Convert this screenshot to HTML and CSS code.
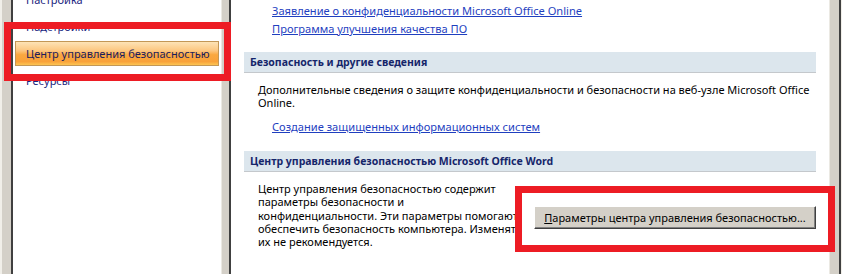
FILE: index.html
```html
<!DOCTYPE html>
<html lang="ru">
<head>
  <meta charset="UTF-8">
  <title>Параметры Word</title>
  <link rel="stylesheet" href="styles.css">
</head>
<body>
  <div class="dialog">
    <div class="nav">
      <ul class="nav-list">
        <li class="nav-item">Настройка</li>
        <li class="nav-item">Надстройки</li>
        <li class="nav-item is-active">Центр управления безопасностью</li>
        <li class="nav-item">Ресурсы</li>
      </ul>
    </div>

    <div class="main">
      <div class="links links-top">
        <a class="link" href="#">Заявление о конфиденциальности Microsoft Office Online</a>
        <a class="link" href="#">Программа улучшения качества ПО</a>
      </div>

      <div class="bar">Безопасность и другие сведения</div>
      <div class="section">
        <p class="text">Дополнительные сведения о защите конфиденциальности и безопасности на веб-узле Microsoft Office<br>Online.</p>
        <div class="links links-inner">
          <a class="link" href="#">Создание защищенных информационных систем</a>
        </div>
      </div>

      <div class="bar bar-second">Центр управления безопасностью Microsoft Office Word</div>
      <div class="section section-row">
        <p class="text">Центр управления безопасностью содержит<br>параметры безопасности и<br>конфиденциальности. Эти параметры помогают<br>обеспечить безопасность компьютера. Изменять<br>их не рекомендуется.</p>
        <button class="btn" type="button"><u>П</u>араметры центра управления безопасностью...</button>
      </div>
    </div>
  </div>

  <!-- красные рамки-выделения поверх окна -->
  <div class="mark mark-nav"></div>
  <div class="mark mark-btn"></div>
</body>
</html>
```

FILE: styles.css
```css
body {
  margin: 0;
  font-family: "Noto Sans", "Open Sans", sans-serif;
  font-size: 11.1px;
  color: #000;
  background: #fff;
}
.dialog {
  display: flex;
  height: 274px;
  box-sizing: border-box;
  background: #d4d0c8;
  border-left: 2px solid #f1efe9;
  border-right: 1px solid #f1efe9;
  padding-left: 9px;
  box-shadow: inset -2px 0 #404040;
  overflow: hidden;
}
.nav {
  flex: none;
  width: 211px;
  box-sizing: border-box;
  background: #fff;
  border-left: 2px solid #404040;
  border-right: 1px solid #ebe9e3;
  overflow: hidden;
}
.nav-list {
  list-style: none;
  margin: -14px 0 0;
  padding: 0;
  font-size: 11px;
}
.nav-item {
  height: 27px;
  line-height: 27px;
  padding-left: 13px;
  color: #1a2580;
  white-space: nowrap;
}
.nav-item.is-active {
  height: 25px;
  line-height: 23px;
  margin: 1px 2px;
  padding-left: 10px;
  box-sizing: border-box;
  color: #1b1d5e;
  border: 1px solid #c39756;
  background: linear-gradient(to bottom, #fde3b6 0%, #fcc67f 38%, #faa840 55%, #f9a23a 85%, #fcc553 100%);
}
.main {
  flex: 1;
  margin: 0 11px 0 7px;
  background: #fff;
  border-left: 2px solid #404040;
  border-right: 1px solid #ebe9e3;
  overflow: hidden;
}
.links {
  padding-left: 41px;
}
.links-top {
  padding-top: 2px;
  margin-bottom: 14px;
}
.links-inner {
  padding-left: 14px;
  margin-top: 8px;
}
.link {
  display: block;
  line-height: 18px;
  color: #1f3fbf;
  text-decoration: underline;
  white-space: nowrap;
}
.bar {
  height: 20px;
  line-height: 20px;
  margin: 0 13px;
  padding-left: 6px;
  background: #dce6ed;
  border-bottom: 1px solid #c4c8cc;
  font-size: 10.5px;
  font-weight: bold;
  color: #15256a;
  white-space: nowrap;
}
.bar-second {
  margin-top: 15px;
}
.section {
  padding: 10px 13px 0 27px;
}
.text {
  margin: 0;
  font-size: 11px;
  line-height: 13.4px;
  white-space: nowrap;
}
.section-row {
  display: flex;
  align-items: center;
}
.btn {
  width: 282px;
  height: 23px;
  margin-left: auto;
  margin-top: 4px;
  padding: 0;
  box-sizing: border-box;
  font: inherit;
  font-size: 11px;
  color: #000;
  background: #d4d0c8;
  border: 1px solid;
  border-color: #fff #404040 #404040 #fff;
  box-shadow: inset -1px -1px #808080;
}
.mark {
  position: absolute;
  box-sizing: border-box;
  border: 7px solid #ed1c24;
}
.mark-nav {
  left: 4px;
  top: 22px;
  width: 227px;
  height: 59px;
}
.mark-btn {
  left: 515px;
  top: 186px;
  width: 320px;
  height: 66px;
}
```
